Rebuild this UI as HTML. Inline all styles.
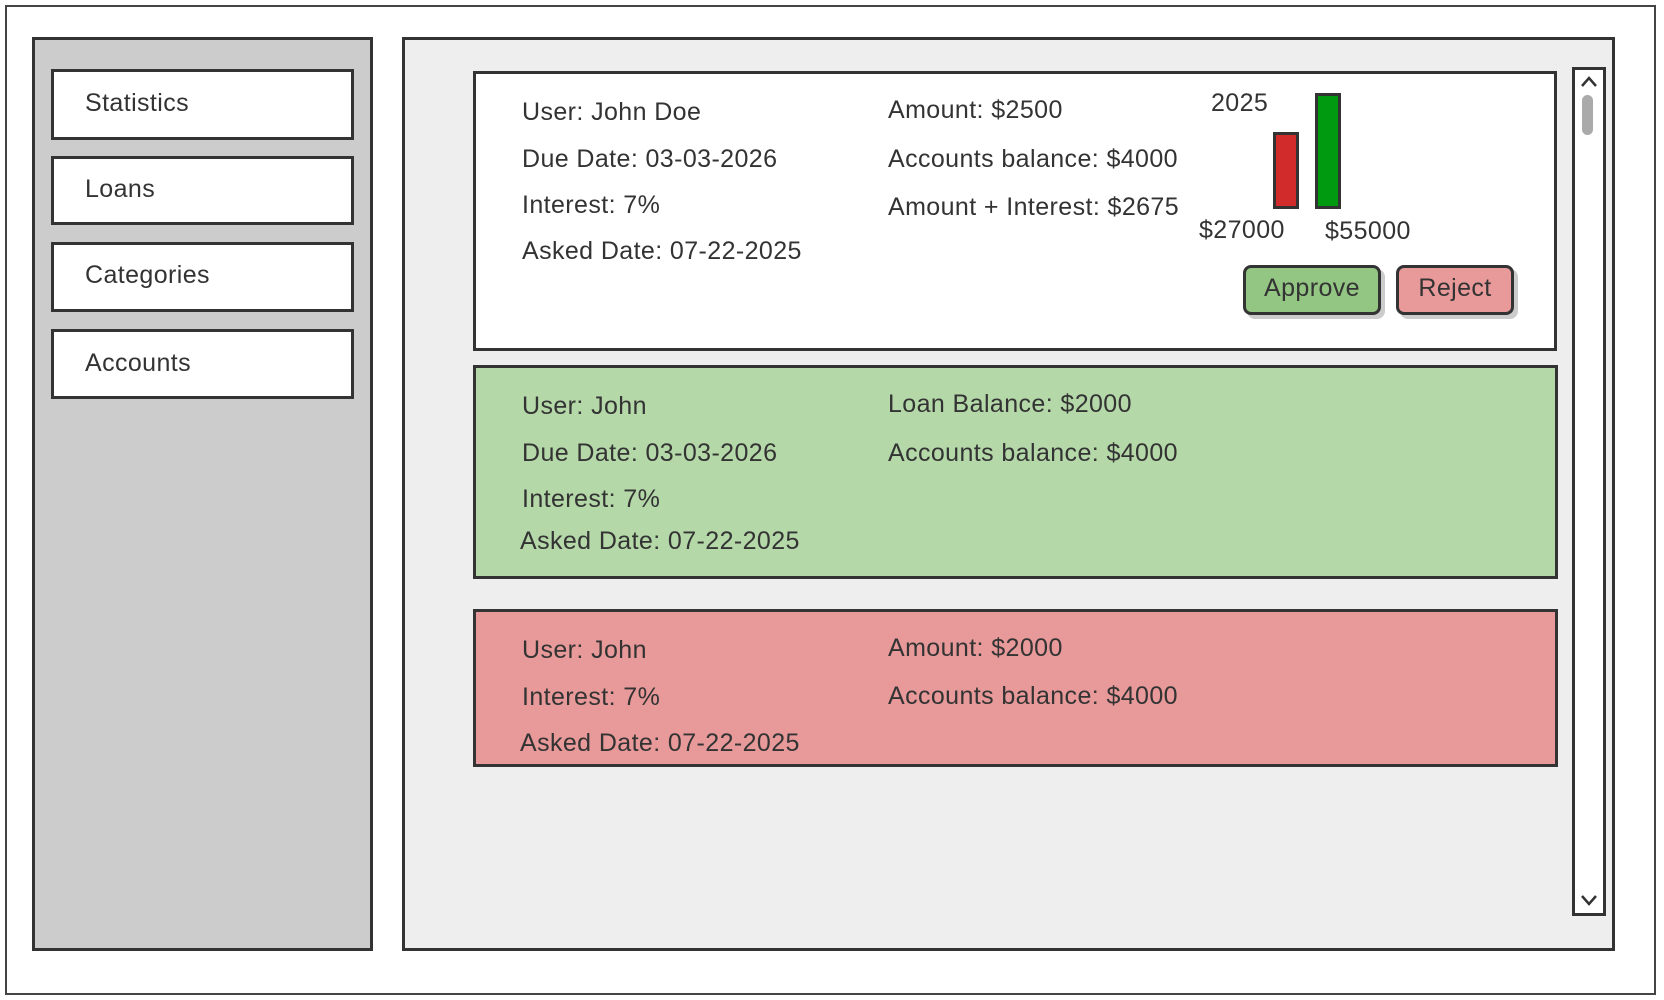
<!DOCTYPE html>
<html><head><meta charset="utf-8"><style>
*{margin:0;padding:0;box-sizing:border-box}
body{width:1664px;height:1000px;background:#fff;position:relative;overflow:hidden;font-family:"Liberation Sans",sans-serif;color:#333}
.b{position:absolute;border:3px solid #333}
.t{position:absolute;font-size:25px;line-height:28px;white-space:nowrap;color:#333;letter-spacing:0.4px}
</style></head><body>
<div class="b" style="left:5px;top:5px;width:1651px;height:990px;border-width:2px;border-color:#444"></div>
<div class="b" style="left:32px;top:37px;width:341px;height:914px;background:#ccc"></div>
<div class="b" style="left:51px;top:69px;width:303px;height:71px;background:#fff"></div>
<div class="t" style="left:85px;top:89px">Statistics</div>
<div class="b" style="left:51px;top:156px;width:303px;height:69px;background:#fff"></div>
<div class="t" style="left:85px;top:175px">Loans</div>
<div class="b" style="left:51px;top:242px;width:303px;height:70px;background:#fff"></div>
<div class="t" style="left:85px;top:261px">Categories</div>
<div class="b" style="left:51px;top:329px;width:303px;height:70px;background:#fff"></div>
<div class="t" style="left:85px;top:349px">Accounts</div>

<div class="b" style="left:402px;top:37px;width:1213px;height:914px;background:#eee"></div>
<div class="b" style="left:1572px;top:67px;width:34px;height:849px;background:#fff"></div>
<div style="position:absolute;left:1582px;top:95px;width:11px;height:40px;border-radius:6px;background:#aaa"></div>
<svg style="position:absolute;left:1578px;top:72px" width="22" height="20"><path d="M4 14 L11 6 L18 14" fill="none" stroke="#333" stroke-width="2.5"/></svg>
<svg style="position:absolute;left:1578px;top:890px" width="22" height="20"><path d="M4 6 L11 14 L18 6" fill="none" stroke="#333" stroke-width="2.5"/></svg>

<div class="b" style="left:473px;top:71px;width:1084px;height:280px;background:#fff"></div>
<div class="t" style="left:522px;top:98px">User: John Doe</div>
<div class="t" style="left:522px;top:145px">Due Date: 03-03-2026</div>
<div class="t" style="left:522px;top:191px">Interest: 7%</div>
<div class="t" style="left:522px;top:237px">Asked Date: 07-22-2025</div>
<div class="t" style="left:888px;top:96px">Amount: $2500</div>
<div class="t" style="left:888px;top:145px">Accounts balance: $4000</div>
<div class="t" style="left:888px;top:193px">Amount + Interest: $2675</div>
<div class="t" style="left:1211px;top:89px">2025</div>
<div class="b" style="left:1273px;top:132px;width:26px;height:77px;background:#d12b2b"></div>
<div class="b" style="left:1315px;top:93px;width:26px;height:116px;background:#009a10"></div>
<div class="t" style="left:1199px;top:216px">$27000</div>
<div class="t" style="left:1325px;top:217px">$55000</div>
<div class="b" style="left:1243px;top:265px;width:138px;height:50px;background:#93c683;border-radius:8px;box-shadow:4px 4px 0 #ccc"></div>
<div class="t" style="left:1243px;top:274px;width:138px;text-align:center">Approve</div>
<div class="b" style="left:1396px;top:265px;width:118px;height:50px;background:#e89999;border-radius:8px;box-shadow:4px 4px 0 #ccc"></div>
<div class="t" style="left:1396px;top:274px;width:118px;text-align:center">Reject</div>

<div class="b" style="left:473px;top:365px;width:1085px;height:214px;background:#b4d8a8"></div>
<div class="t" style="left:522px;top:392px">User: John</div>
<div class="t" style="left:522px;top:439px">Due Date: 03-03-2026</div>
<div class="t" style="left:522px;top:485px">Interest: 7%</div>
<div class="t" style="left:520px;top:527px">Asked Date: 07-22-2025</div>
<div class="t" style="left:888px;top:390px">Loan Balance: $2000</div>
<div class="t" style="left:888px;top:439px">Accounts balance: $4000</div>

<div class="b" style="left:473px;top:609px;width:1085px;height:158px;background:#e89999"></div>
<div class="t" style="left:522px;top:636px">User: John</div>
<div class="t" style="left:522px;top:683px">Interest: 7%</div>
<div class="t" style="left:520px;top:729px">Asked Date: 07-22-2025</div>
<div class="t" style="left:888px;top:634px">Amount: $2000</div>
<div class="t" style="left:888px;top:682px">Accounts balance: $4000</div>
</body></html>
